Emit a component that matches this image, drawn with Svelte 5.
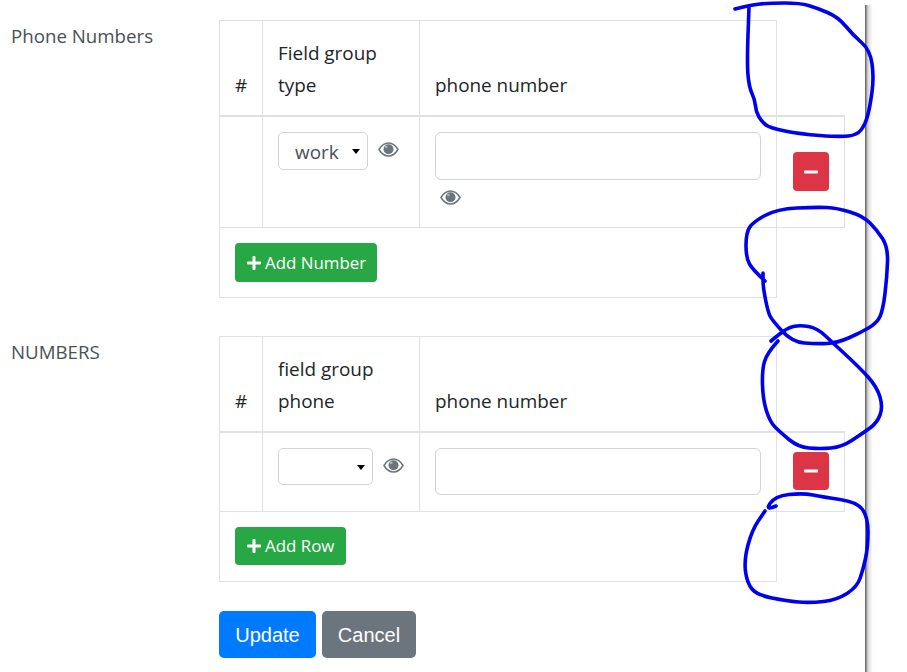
<script>
  const plus = "M416 208H272V64c0-17.67-14.33-32-32-32h-32c-17.67 0-32 14.33-32 32v144H32c-17.67 0-32 14.33-32 32v32c0 17.67 14.33 32 32 32h144v144c0 17.67 14.33 32 32 32h32c17.67 0 32-14.33 32-32V304h144c17.67 0 32-14.33 32-32v-32c0-17.67-14.33-32-32-32z";
  const minus = "M416 208H32c-17.67 0-32 14.33-32 32v32c0 17.67 14.33 32 32 32h384c17.67 0 32-14.33 32-32v-32c0-17.67-14.33-32-32-32z";

  const strokes = [
    [[735,9],[750,5],[770,3],[800,3],[817,8],[838,17],[853,35],[870,50],[874,77],[870,107],[865,125],[857,135],[840,137],[800,134],[770,128],[762,122],[756,112],[755,100],[749,87],[747,63],[749,7]],
    [[765,281],[753,270],[746,258],[746,233],[753,222],[777,209],[817,207],[837,208],[863,216],[877,230],[888,247],[887,277],[883,310],[877,323],[860,333],[837,343],[817,344],[792,342],[772,320],[768,312],[763,287],[763,273]],
    [[778,341],[767,353],[762,370],[763,400],[770,422],[780,432],[798,447],[820,449],[842,447],[863,433],[877,423],[883,407],[877,387],[860,368],[833,343],[817,328],[800,325],[787,328],[771,341]],
    [[776,506],[765,511],[775,496],[803,493],[823,497],[857,502],[868,517],[868,547],[863,570],[857,587],[837,600],[810,603],[787,601],[757,595],[747,583],[744,560],[752,530],[765,511]]
  ];

  function smooth(pts) {
    let d = `M${pts[0][0]} ${pts[0][1]}`;
    for (let i = 1; i < pts.length - 1; i++) {
      const mx = (pts[i][0] + pts[i + 1][0]) / 2;
      const my = (pts[i][1] + pts[i + 1][1]) / 2;
      d += ` Q${pts[i][0]} ${pts[i][1]} ${mx} ${my}`;
    }
    const last = pts[pts.length - 1];
    return d + ` L${last[0]} ${last[1]}`;
  }

  const sections = [
    { label: "Phone Numbers", head: ["Field group", "type"], value: "work", options: ["work"], selectClass: "narrow", eyeBelow: true, add: "Add Number", addClass: "tall" },
    { label: "NUMBERS", head: ["field group", "phone"], value: "", options: [""], selectClass: "wide", eyeBelow: false, add: "Add Row", addClass: "short" }
  ];
</script>

{#snippet icon(path, box, cls)}
  <svg class={cls} viewBox={box} aria-hidden="true"><path d={path} fill="currentColor" /></svg>
{/snippet}

{#snippet eye(cls)}
  <svg class={cls} viewBox="0 0 21 15" aria-hidden="true">
    <path d="M1 7.5C3.4 3.4 6.7 1 10.5 1s7.1 2.4 9.5 6.5c-2.4 4.1-5.7 6.5-9.5 6.5S3.4 11.600 1 7.500z" fill="none" stroke="currentColor" stroke-width="1.500" />
    <circle cx="10.500" cy="7.300" r="5" fill="currentColor" />
    <circle cx="8.300" cy="5" r="1.300" fill="#fff" opacity="0.450" />
  </svg>
{/snippet}

<main class="page">
  {#each sections as s}
    <section class="field">
      <div class="label">{s.label}</div>
      <div class="tbl">
        <div class="cell head num">#</div>
        <div class="cell head">{s.head[0]}<br />{s.head[1]}</div>
        <div class="cell head phone">phone number</div>
        <div class="blank"></div>

        <div class="cell body num"></div>
        <div class="cell body typecell">
          <div class="selectwrap {s.selectClass}">
            <select class="select" value={s.value}>
              {#each s.options as o}<option value={o}>{o}</option>{/each}
            </select>
            <span class="caret"></span>
          </div>
          {@render eye("eye")}
        </div>
        <div class="cell body phonecell">
          <input class="input" class:short={!s.eyeBelow} type="text" />
          {#if s.eyeBelow}
            {@render eye("eye below")}
          {/if}
        </div>
        <div class="cell body action">
          <button class="btn danger" class:tall={s.eyeBelow} type="button">
            {@render icon(minus, "0 0 448 512", "minus")}
          </button>
        </div>

        <div class="cell foot">
          <button class="btn success {s.addClass}" type="button">
            {@render icon(plus, "0 0 448 512", "plus")}{s.add}
          </button>
        </div>
      </div>
    </section>
  {/each}

  <div class="actions">
    <button class="btn primary big" type="button">Update</button>
    <button class="btn secondary big" type="button">Cancel</button>
  </div>
</main>

<div class="edge"></div>
<svg class="ink" width="907" height="672" viewBox="0 0 907 672" aria-hidden="true">
  {#each strokes as st}
    <path d={smooth(st)} />
  {/each}
</svg>

<style>
  :global(body) {
    background: #fff;
    overflow: hidden;
  }
  .page {
    box-sizing: border-box;
    width: 907px;
    height: 672px;
    padding-top: 20px;
    font-family: "Open Sans", "Noto Sans", sans-serif;
    font-size: 18.9px;
    line-height: 32px;
    color: #212529;
  }
  .field {
    display: flex;
    margin-bottom: 38px;
  }
  .label {
    width: 208px;
    padding-left: 11px;
    color: #495057;
    flex: none;
    font-size: 18.7px;
  }
  .tbl {
    display: grid;
    grid-template-columns: 44px 157px 357px 68px;
    width: 626px;
    align-self: flex-start;
  }
  .cell {
    box-sizing: border-box;
    border-right: 1px solid #dee2e6;
    border-bottom: 1px solid #dee2e6;
  }
  .head {
    border-top: 1px solid #dee2e6;
    border-bottom: 2px solid #dee2e6;
    padding: 16px 15px 14px;
  }
  .head.num {
    display: flex;
    align-items: flex-end;
    padding-left: 15px;
    padding-right: 0;
    border-left: 1px solid #dee2e6;
  }
  .head.phone {
    display: flex;
    align-items: flex-end;
    justify-content: flex-start;
  }
  .blank {
    border-bottom: 1px solid #dee2e6;
    margin-bottom: 1px;
  }
  .body {
    padding: 15px;
  }
  .body.num {
    border-left: 1px solid #dee2e6;
  }
  .typecell {
    display: flex;
    align-items: flex-start;
  }
  .selectwrap {
    position: relative;
    flex: none;
  }
  .selectwrap.narrow { width: 90px; height: 38px; }
  .selectwrap.wide { width: 95px; height: 37px; }
  .select {
    appearance: none;
    box-sizing: border-box;
    display: block;
    width: 100%;
    height: 100%;
    padding: 2px 0 0 16px;
    border: 1px solid #ced4da;
    border-radius: 5px;
    background: #fff;
    color: #495057;
    font: inherit;
  }
  .caret {
    position: absolute;
    right: 8px;
    top: 17px;
    border-left: 4.5px solid transparent;
    border-right: 4.5px solid transparent;
    border-top: 5px solid #000;
  }
  .eye {
    flex: none;
    width: 21px;
    height: 15px;
    margin: 10px 0 0 10px;
    color: #6c757d;
    display: block;
  }
  .eye.below {
    margin: 10px 0 7px 5px;
  }
  .input {
    box-sizing: border-box;
    display: block;
    width: 326px;
    height: 48px;
    border: 1px solid #ced4da;
    border-radius: 6px;
    background: #fff;
    outline: none;
  }
  .input.short {
    height: 47px;
    margin-bottom: 1px;
  }
  .action {
    border-top: 1px solid #dee2e6;
    display: flex;
    align-items: center;
    justify-content: center;
    padding: 0;
    margin-top: -1px;
  }
  .foot {
    grid-column: 1 / span 3;
    padding: 15px;
    border-left: 1px solid #dee2e6;
    display: flex;
    align-items: flex-start;
  }
  .btn {
    display: inline-flex;
    align-items: center;
    justify-content: center;
    border: 0;
    border-radius: 4px;
    color: #fff;
    font: inherit;
    padding: 0;
  }
  .danger {
    width: 36px;
    height: 38px;
    margin-bottom: 2px;
    background: #dc3545;
  }
  .danger.tall {
    height: 39px;
    margin-bottom: 1px;
  }
  .minus {
    width: 14px;
    height: 16px;
    display: block;
  }
  .success {
    background: #28a745;
    justify-content: flex-start;
    padding: 0 0 0 12px;
    font-size: 16.9px;
  }
  .success.tall { width: 142px; height: 39px; }
  .success.short { width: 111px; height: 38px; margin-bottom: 1px; }
  .plus {
    width: 14px;
    height: 16px;
    margin-right: 4px;
    display: block;
  }
  .actions {
    display: flex;
    gap: 6px;
    margin-left: 219px;
    margin-top: -9px;
  }
  .big {
    height: 47px;
    font-family: "Liberation Sans", Arial, sans-serif;
    font-size: 20px;
    border-radius: 5px;
  }
  .primary { width: 97px; background: #007bff; }
  .secondary { width: 94px; background: #6c757d; }
  .edge {
    position: absolute;
    left: 865px;
    top: 5px;
    bottom: 0;
    width: 8px;
    background: linear-gradient(to right, #666 0, #777 1px, #bbb 2px, #e4e4e4 4px, #fff 100%);
  }
  .ink {
    position: absolute;
    left: 0;
    top: 0;
    pointer-events: none;
  }
  .ink path {
    fill: none;
    stroke: #0000f0;
    stroke-width: 3.6px;
    stroke-linecap: round;
    stroke-linejoin: round;
  }
</style>
